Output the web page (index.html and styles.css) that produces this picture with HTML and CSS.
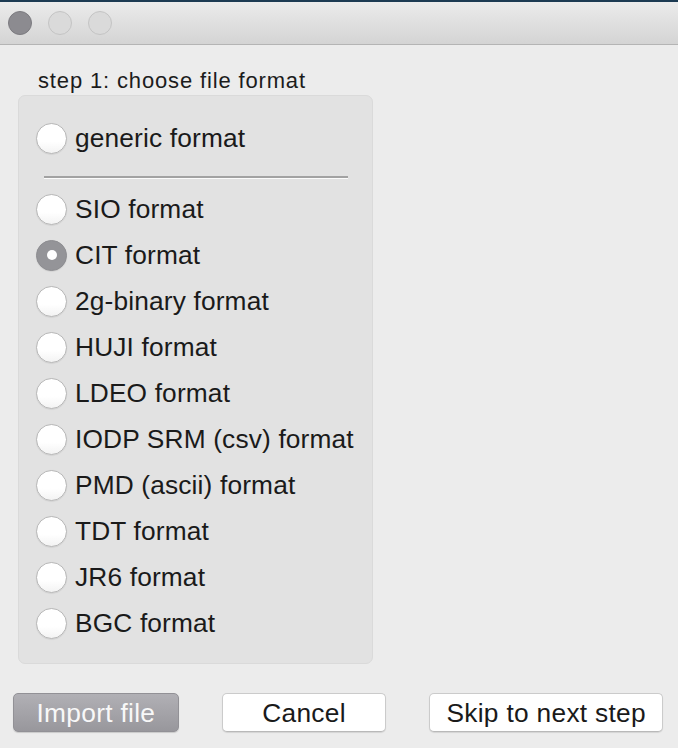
FILE: index.html
```html
<!DOCTYPE html>
<html>
<head>
<meta charset="utf-8">
<link rel="stylesheet" href="styles.css">
</head>
<body>
<div class="window">
  <div class="titlebar">
    <span class="light light-close"></span>
    <span class="light"></span>
    <span class="light"></span>
  </div>
  <div class="content">
    <div class="step-label">step 1: choose file format</div>
    <div class="group">
      <label class="row"><span class="radio"></span><span class="txt">generic format</span></label>
      <div class="sep"></div>
      <label class="row"><span class="radio"></span><span class="txt">SIO format</span></label>
      <label class="row"><span class="radio checked"></span><span class="txt">CIT format</span></label>
      <label class="row"><span class="radio"></span><span class="txt">2g-binary format</span></label>
      <label class="row"><span class="radio"></span><span class="txt">HUJI format</span></label>
      <label class="row"><span class="radio"></span><span class="txt">LDEO format</span></label>
      <label class="row"><span class="radio"></span><span class="txt">IODP SRM (csv) format</span></label>
      <label class="row"><span class="radio"></span><span class="txt">PMD (ascii) format</span></label>
      <label class="row"><span class="radio"></span><span class="txt">TDT format</span></label>
      <label class="row"><span class="radio"></span><span class="txt">JR6 format</span></label>
      <label class="row"><span class="radio"></span><span class="txt">BGC format</span></label>
    </div>
    <div class="buttons">
      <button class="btn btn-import">Import file</button>
      <button class="btn btn-cancel">Cancel</button>
      <button class="btn btn-skip">Skip to next step</button>
    </div>
  </div>
</div>
</body>
</html>
```

FILE: styles.css
```css
html, body {
  margin: 0;
  padding: 0;
}
body {
  width: 678px;
  height: 748px;
  background: #ececec;
  font-family: "Liberation Sans", Arial, sans-serif;
  color: #1c1c1c;
  overflow: hidden;
}
.window {
  width: 678px;
  height: 748px;
  display: flex;
  flex-direction: column;
}
.titlebar {
  height: 42px;
  border-top: 2px solid #1c3a52;
  border-bottom: 1px solid #b4b4b4;
  background: linear-gradient(#ebebeb, #d4d4d4);
  display: flex;
  align-items: center;
  gap: 16px;
  padding-left: 8px;
  box-sizing: content-box;
}
.light {
  width: 22px;
  height: 22px;
  border-radius: 50%;
  background: #dadada;
  border: 1px solid #c4c4c4;
}
.light-close {
  background: #8c8b90;
  border-color: #7c7b80;
}
.content {
  padding: 0 15px 0 13px;
  display: flex;
  flex-direction: column;
}
.step-label {
  font-size: 22px;
  letter-spacing: 0.85px;
  margin: 22px 0 0 25px;
  height: 28px;
  line-height: 28px;
}
.group {
  margin: 0 0 0 5px;
  width: 355px;
  height: 569px;
  box-sizing: border-box;
  background: #e2e2e2;
  border: 1px solid #dadada;
  border-radius: 7px;
  padding: 19px 0 0 17px;
  display: flex;
  flex-direction: column;
}
.row {
  height: 46px;
  display: flex;
  align-items: center;
  gap: 8px;
}
.radio {
  width: 31px;
  height: 31px;
  flex: none;
  box-sizing: border-box;
  border-radius: 50%;
  background: linear-gradient(#ffffff 60%, #f3f3f3);
  border: 1px solid #b8b8b8;
  box-shadow: 0 0.5px 1px rgba(0,0,0,0.12);
  display: flex;
  align-items: center;
  justify-content: center;
}
.radio.checked {
  background: #949498;
  border-color: #8e8e92;
}
.radio.checked::after {
  content: "";
  width: 10px;
  height: 10px;
  border-radius: 50%;
  background: #ffffff;
}
.txt {
  font-size: 26.3px;
  letter-spacing: 0.15px;
  line-height: 30px;
  color: #1a1a1a;
  white-space: nowrap;
}
.sep {
  margin: 15px 0 7px 8px;
  width: 304px;
  height: 2px;
  background: #a2a2a2;
  border-bottom: 1px solid #fbfbfb;
}
.buttons {
  margin-top: 29px;
  display: flex;
  gap: 0;
}
.btn {
  height: 39px;
  border-radius: 5px;
  font-family: "Liberation Sans", Arial, sans-serif;
  font-size: 26.3px;
  letter-spacing: 0.3px;
  line-height: 36px;
  padding: 0 0 0 0;
  box-sizing: border-box;
}
.btn-import {
  width: 166px;
  background: linear-gradient(#b1b0b5, #98979c);
  border: 1px solid #929196;
  color: #f8f8f8;
  box-shadow: 0 1px 1px rgba(0,0,0,0.15);
}
.btn-cancel, .btn-skip {
  background: #ffffff;
  border: 1px solid #cbcbcb;
  border-bottom-color: #b9b9b9;
  color: #1a1a1a;
  box-shadow: 0 1px 1px rgba(0,0,0,0.10);
}
.btn-cancel {
  width: 165px;
  margin-left: 43px;
}
.btn-skip {
  width: 234px;
  margin-left: 43px;
}
```
